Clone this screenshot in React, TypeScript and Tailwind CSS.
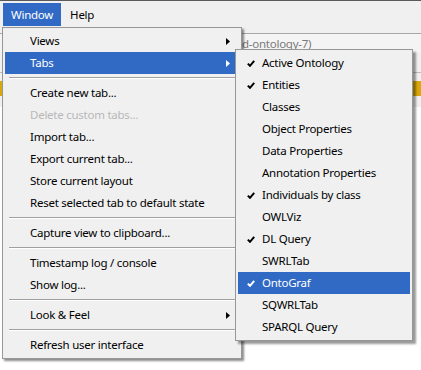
import React from "react";

type Item = {
  label?: string;
  sep?: boolean;
  arrow?: boolean;
  disabled?: boolean;
  active?: boolean;
  checked?: boolean;
};

const windowMenu: Item[] = [
  { label: "Views", arrow: true },
  { label: "Tabs", arrow: true, active: true },
  { sep: true },
  { label: "Create new tab..." },
  { label: "Delete custom tabs...", disabled: true },
  { label: "Import tab..." },
  { label: "Export current tab..." },
  { label: "Store current layout" },
  { label: "Reset selected tab to default state" },
  { sep: true },
  { label: "Capture view to clipboard..." },
  { sep: true },
  { label: "Timestamp log / console" },
  { label: "Show log..." },
  { sep: true },
  { label: "Look & Feel", arrow: true },
  { sep: true },
  { label: "Refresh user interface" },
];

const tabsMenu: Item[] = [
  { label: "Active Ontology", checked: true },
  { label: "Entities", checked: true },
  { label: "Classes" },
  { label: "Object Properties" },
  { label: "Data Properties" },
  { label: "Annotation Properties" },
  { label: "Individuals by class", checked: true },
  { label: "OWLViz" },
  { label: "DL Query", checked: true },
  { label: "SWRLTab" },
  { label: "OntoGraf", checked: true, active: true },
  { label: "SQWRLTab" },
  { label: "SPARQL Query" },
];

const Arrow = ({ white }: { white?: boolean }) => (
  <svg width="4" height="7" viewBox="0 0 4 7" className="shrink-0">
    <path d="M0 0 L4 3.5 L0 7 Z" fill={white ? "#fff" : "#000"} />
  </svg>
);

const Check = ({ white }: { white?: boolean }) => (
  <svg width="8" height="7" viewBox="0 0 8 7" className="shrink-0">
    <path
      d="M0.8 3.6 L3 5.8 L7.2 0.9"
      fill="none"
      stroke={white ? "#fff" : "#000"}
      strokeWidth="2"
    />
  </svg>
);

const Separator = () => (
  <div className="h-[8px] flex items-center px-[4px]">
    <div className="w-full border-t border-t-[#a0a0a0] border-b border-b-white" />
  </div>
);

export default function App() {
  return (
    <div
      className="relative w-[421px] h-[370px] overflow-hidden bg-white text-[11.5px] tracking-[-0.25px] text-black"
      style={{ fontFamily: '"Noto Sans", "Open Sans", sans-serif' }}
    >
      {/* menu bar */}
      <div className="h-[27px] bg-[#f0f0f0] border-t border-t-[#5a5a5a] flex items-start pt-[2px] pl-[3px]">
        <div className="h-[23px] px-[8px] flex items-center bg-[#316ac5] text-white">Window</div>
        <div className="h-[23px] px-[9px] flex items-center">Help</div>
      </div>

      {/* app behind the menus */}
      <div className="bg-[#f0f0f0] h-[80px]">
        <div className="pt-[6px]">
          <div className="h-[20px] border-t border-t-[#a8a8a8] bg-[#f4f4f4] flex items-center pl-[242px] text-[#7a7a7a]">
            d-ontology-7)
          </div>
        </div>
        <div className="mt-[19px] border-t border-t-[#bdbdbd] h-[9px]" />
        <div className="h-[15px] bg-[#d9a80a]" />
      </div>

      {/* Window menu */}
      <div className="absolute left-[2px] top-[27px] w-[240px] bg-[#f0f0f0] border border-[#979797] shadow-[2px_2px_2px_rgba(0,0,0,0.45)] py-[2px] px-[2px]">
        {windowMenu.map((it, i) =>
          it.sep ? (
            <Separator key={i} />
          ) : (
            <div
              key={i}
              className={`h-[22px] flex items-center justify-between pl-[25px] pr-[9px] ${
                it.active ? "bg-[#316ac5] text-white" : ""
              } ${it.disabled ? "text-[#b8b8b8]" : ""}`}
            >
              <span>{it.label}</span>
              {it.arrow && <Arrow white={it.active} />}
            </div>
          )
        )}
      </div>

      {/* Tabs submenu */}
      <div className="absolute left-[235px] top-[49px] w-[178px] bg-[#f0f0f0] border border-[#979797] shadow-[3px_3px_2px_rgba(0,0,0,0.4)] py-[2px] px-[2px]">
        {tabsMenu.map((it, i) => (
          <div
            key={i}
            className={`h-[22px] flex items-center ${it.active ? "bg-[#316ac5] text-white" : ""}`}
          >
            <div className="w-[24px] flex justify-center pl-[2px]">
              {it.checked && <Check white={it.active} />}
            </div>
            <span>{it.label}</span>
          </div>
        ))}
      </div>
    </div>
  );
}
